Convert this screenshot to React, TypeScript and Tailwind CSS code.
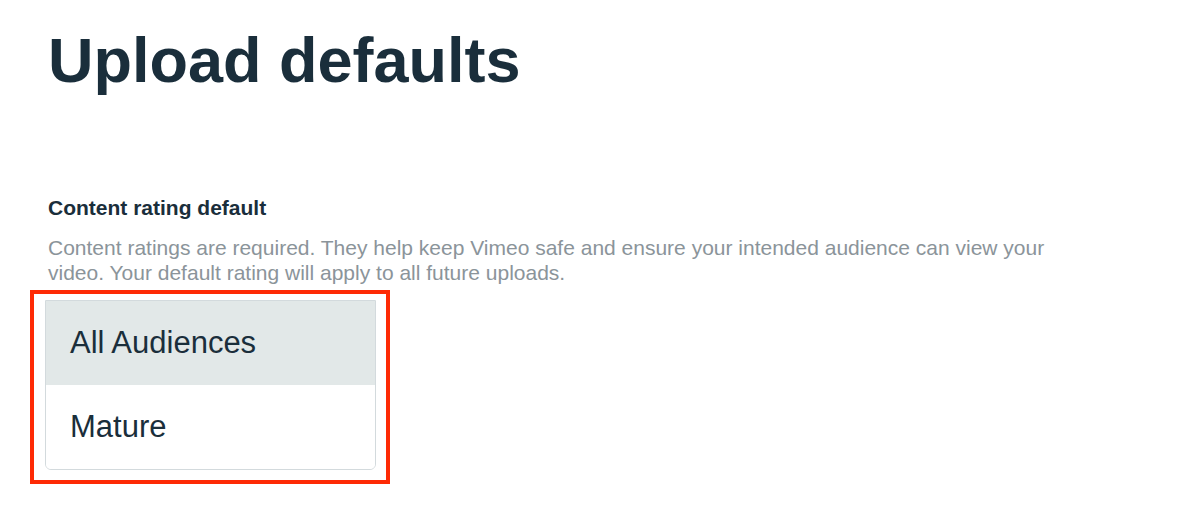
import React from 'react';

const options = ['All Audiences', 'Mature'];

export default function App() {
  const selected = 'All Audiences';

  return (
    <div className="min-h-screen bg-white pl-12 pt-[22px] font-['Liberation_Sans',Arial,sans-serif] text-[#1a2e3b]">
      <h1 className="text-[63px] font-bold leading-[76px]">Upload defaults</h1>

      <div className="mt-[98px]">
        <h2 className="text-[21px] font-bold leading-[24px]">Content rating default</h2>
        <p className="mt-[15px] w-[1030px] text-[21px] leading-[25px] text-[#8b949a]">
          Content ratings are required. They help keep Vimeo safe and ensure your intended audience can view your
          video. Your default rating will apply to all future uploads.
        </p>

        {/* highlighted rating list */}
        <div className="-ml-[18px] mt-[5px] w-[360px] border-4 border-[#fe2a04] pb-[10px] pl-[11px] pr-[10px] pt-[6px]">
          <div className="overflow-hidden rounded-b-md border border-[#d3dadd]">
            {options.map((opt) => (
              <div
                key={opt}
                className={`flex h-[84px] items-center px-[24px] text-[31px] ${
                  opt === selected ? 'bg-[#e2e8e8]' : 'bg-white'
                }`}
              >
                {opt}
              </div>
            ))}
          </div>
        </div>
      </div>
    </div>
  );
}
